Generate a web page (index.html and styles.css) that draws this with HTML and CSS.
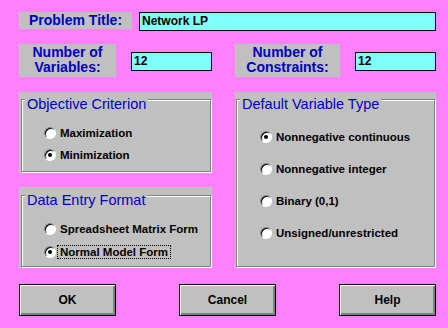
FILE: index.html
```html
<!DOCTYPE html>
<html lang="en">
<head>
    <meta charset="UTF-8">
    <title>Problem Specification</title>
    <link rel="stylesheet" href="styles.css">
</head>
<body>
    <div class="dialog">
        <!-- title -->
        <div class="row">
            <div class="label label-title">Problem Title:</div>
            <div class="field field-title">Network LP</div>
        </div>

        <!-- counts -->
        <div class="row row-counts">
            <div class="label label-count">Number of<br>Variables:</div>
            <div class="field field-count">12</div>
            <div class="label label-count label-constraints">Number of<br>Constraints:</div>
            <div class="field field-count">12</div>
        </div>

        <div class="groups">
            <div class="column">
                <div class="group">
                    <div class="frame">
                        <span class="caption">Objective Criterion</span>
                        <div class="options">
                            <div class="option"><span class="radio"></span><span class="option-text">Maximization</span></div>
                            <div class="option"><span class="radio on"></span><span class="option-text">Minimization</span></div>
                        </div>
                    </div>
                </div>
                <div class="group group-low">
                    <div class="frame">
                        <span class="caption">Data Entry Format</span>
                        <div class="options">
                            <div class="option"><span class="radio"></span><span class="option-text">Spreadsheet Matrix Form</span></div>
                            <div class="option option-tall"><span class="radio on"></span><span class="option-text focus">Normal Model Form</span></div>
                        </div>
                    </div>
                </div>
            </div>

            <div class="group group-type">
                <div class="frame">
                    <span class="caption">Default Variable Type</span>
                    <div class="options options-type">
                        <div class="option"><span class="radio on"></span><span class="option-text">Nonnegative continuous</span></div>
                        <div class="option"><span class="radio"></span><span class="option-text">Nonnegative integer</span></div>
                        <div class="option"><span class="radio"></span><span class="option-text">Binary (0,1)</span></div>
                        <div class="option"><span class="radio"></span><span class="option-text">Unsigned/unrestricted</span></div>
                    </div>
                </div>
            </div>
        </div>

        <div class="buttons">
            <button class="button">OK</button>
            <button class="button">Cancel</button>
            <button class="button">Help</button>
        </div>
    </div>
</body>
</html>
```

FILE: styles.css
```css
body {
    margin: 0;
    background-color: #ff80ff;
    font-family: "Liberation Sans", Arial, sans-serif;
}
.dialog {
    width: 448px;
    height: 328px;
    box-sizing: border-box;
    padding: 12px 12px 0 19px;
}
.row {
    display: flex;
    align-items: flex-start;
}
.row-counts {
    margin-top: 13px;
}
.label {
    box-sizing: border-box;
    background: #c0c0c0;
    color: #0000c0;
    font-size: 14px;
    font-weight: bold;
    text-align: center;
}
.label-title {
    width: 113px;
    height: 17px;
    line-height: 17px;
}
.label-count {
    width: 97px;
    height: 33px;
    padding-top: 1px;
    line-height: 15px;
}
.label-constraints {
    width: 105px;
    margin-left: 23px;
}
.field {
    box-sizing: border-box;
    height: 19px;
    padding-left: 2px;
    border: 1px solid #000;
    background: #80ffff;
    color: #000;
    font-size: 12px;
    font-weight: bold;
    line-height: 17px;
}
.field-title {
    width: 297px;
    margin-left: 7px;
}
.field-count {
    width: 81px;
    margin-left: 15px;
    margin-top: 8px;
}

/* group boxes */
.groups {
    display: flex;
    gap: 23px;
    margin-top: 15px;
}
.column {
    display: flex;
    flex-direction: column;
    gap: 14px;
    width: 193px;
}
.group {
    display: flex;
    box-sizing: border-box;
    padding: 7px 1px 1px 2px;
    background: #c0c0c0;
}
.column .group {
    height: 81px;
}
.group-low {
    padding-top: 8px;
}
.group-type {
    width: 201px;
    height: 176px;
    padding-left: 1px;
}
.frame {
    flex: 1;
    position: relative;
    border: 1px solid #808080;
    box-shadow: inset 1px 1px 0 #fff, 1px 1px 0 #fff;
}
.caption {
    position: absolute;
    top: -4px;
    left: 3px;
    padding: 0 2px;
    background: #c0c0c0;
    color: #0000c0;
    font-size: 14.5px;
    line-height: 16px;
    white-space: nowrap;
}
.options {
    padding: 22px 0 0 22px;
}
.options-type {
    padding: 21px 0 0 23px;
}
.option {
    display: flex;
    align-items: center;
    height: 22px;
    color: #000;
    font-size: 11.5px;
    font-weight: bold;
    white-space: nowrap;
}
.option-tall {
    height: 24px;
}
.options-type .option {
    height: 32px;
}
.radio {
    flex: none;
    position: relative;
    box-sizing: border-box;
    width: 12px;
    height: 12px;
    border: 1px solid;
    border-color: #808080 #fff #fff #808080;
    border-radius: 50%;
    background: #fff;
    box-shadow: inset 1px 1px 0 #000;
}
.radio.on::after {
    content: "";
    position: absolute;
    left: 3px;
    top: 3px;
    width: 4px;
    height: 4px;
    border-radius: 50%;
    background: #000;
}
.option-text {
    margin-left: 1px;
    padding: 0 2px;
    border: 1px dotted transparent;
    line-height: 12px;
}
.option-text.focus {
    border-color: #000;
}

/* buttons */
.buttons {
    display: flex;
    gap: 63px;
    margin-top: 16px;
}
.button {
    width: 97px;
    height: 32px;
    padding: 0;
    border: 1px solid #000;
    background: #c0c0c0;
    box-shadow: inset 1px 1px 0 #fff, inset -2px -2px 0 #808080;
    color: #000;
    font-family: "Liberation Sans", Arial, sans-serif;
    font-size: 12px;
    font-weight: bold;
}
```
